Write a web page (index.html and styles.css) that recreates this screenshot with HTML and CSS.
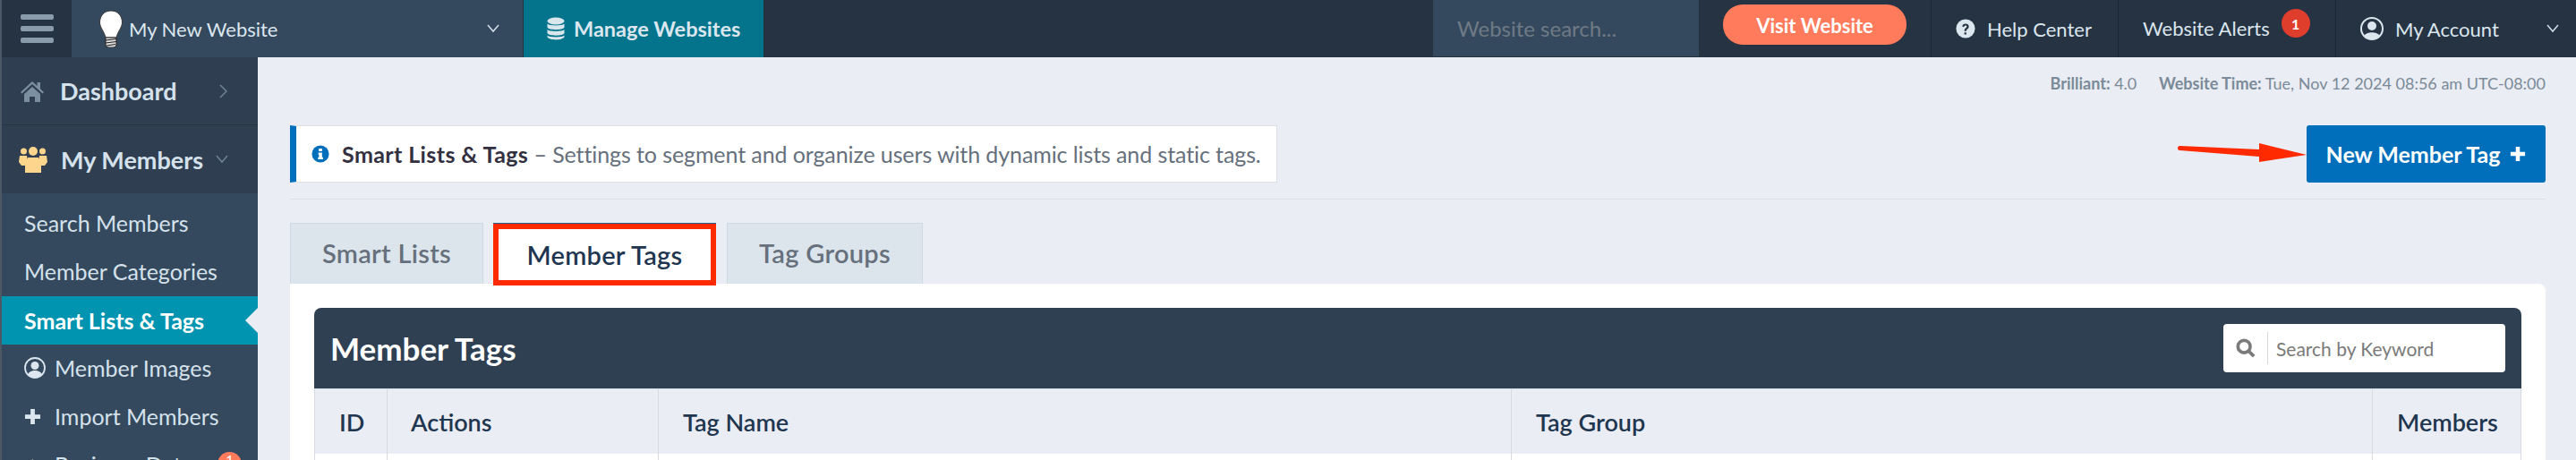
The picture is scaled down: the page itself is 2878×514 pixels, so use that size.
FILE: index.html
```html
<!DOCTYPE html>
<html lang="en">
<head>
    <meta charset="UTF-8">
    <meta name="viewport" content="width=device-width, initial-scale=1.0">
    <title>Member Tags</title>
    <link rel="stylesheet" href="styles.css">
</head>
<body>
    <header class="topbar">
        <div class="menu-toggle"><span></span><span></span><span></span></div>
        <div class="site-picker">
            <svg class="bulb" viewBox="0 0 28 42" width="28" height="42">
                <path d="M14 1C6 1 1.500 7 1.500 14c0 6 5 10 6.500 17h12c1.500-7 6.500-11 6.500-17C26.500 7 22 1 14 1z" fill="#fff" stroke="#333" stroke-width="1"/>
                <path d="M8 31h12v8a3 3 0 0 1-3 3h-6a3 3 0 0 1-3-3z" fill="#ddd" stroke="#222"/>
                <path d="M8 34l12-1.500M8 37l12-1.500M9 40l10-1.500" stroke="#222" stroke-width="1.200"/>
            </svg>
            <span class="site-name">My New Website</span>
            <svg class="chev" viewBox="0 0 14 10" width="14" height="10"><path d="M1 1l6 7 6-7" fill="none" stroke="#d5e0ea" stroke-width="1.500"/></svg>
        </div>
        <a class="manage">
            <svg viewBox="0 0 20 26" width="20" height="26"><g fill="#d9e6ec"><ellipse cx="10" cy="4.500" rx="9.500" ry="4"/><path d="M.5 7.500c2 2.500 17 2.500 19 0v4c-1 3.500-18 3.500-19 0z"/><path d="M.5 14c2 2.500 17 2.500 19 0v4c-1 3.500-18 3.500-19 0z"/><path d="M.5 20.500c2 2.500 17 2.500 19 0v1.500c-1 4.500-18 4.500-19 0z"/></g></svg>
            Manage Websites
        </a>
        <div class="top-spacer"></div>
        <div class="site-search">Website search...</div>
        <div class="visit-wrap"><a class="visit">Visit Website</a></div>
        <a class="top-link help">
            <svg viewBox="0 0 24 24" width="22" height="22"><circle cx="12" cy="12" r="11.500" fill="#dbe6ee"/><path d="M8 9.500C8 7 10 6 12 6s4 1.300 4 3.500c0 3-3 2.800-3 5.500h-2.500c0-4 3-3.800 3-5.500 0-.9-.7-1.300-1.500-1.300s-1.600.5-1.700 1.700zM10.500 16.500H13V19h-2.500z" fill="#263343"/></svg>
            Help Center
        </a>
        <a class="top-link alerts">Website Alerts <span class="alert-count">1</span></a>
        <a class="top-link account">
            <svg viewBox="0 0 26 26" width="26" height="26"><circle cx="13" cy="13" r="12" fill="#263343" stroke="#dbe6ee" stroke-width="2"/><circle cx="13" cy="10" r="5" fill="#dbe6ee"/><path d="M4.500 21c2-5 15-5 17 0-4 5-13 5-17 0z" fill="#dbe6ee"/></svg>
            My Account
            <svg class="chev" viewBox="0 0 14 10" width="14" height="10"><path d="M1 1l6 7 6-7" fill="none" stroke="#d5e0ea" stroke-width="1.500"/></svg>
        </a>
    </header>

    <div class="page">
        <nav class="sidebar">
            <a class="nav-main dashboard">
                <svg viewBox="0 0 26 24" width="26" height="24"><path d="M13 1L0 13l1.500 1.500L13 4l11.500 10.500L26 13l-4-3.700V2h-3.500v4z" fill="#7b8fa0"/><path d="M4 15l9-8 9 8v9h-6v-6h-6v6H4z" fill="#7b8fa0"/></svg>
                <span>Dashboard</span>
                <svg class="nav-chev" viewBox="0 0 10 16" width="10" height="16"><path d="M1 1l7 7-7 7" fill="none" stroke="#6f8394" stroke-width="1.500"/></svg>
            </a>
            <a class="nav-main members">
                <svg viewBox="0 0 32 30" width="32" height="30"><g fill="#fdd58c"><circle cx="5.500" cy="6" r="3.500"/><circle cx="26.500" cy="6" r="3.500"/><circle cx="16" cy="6" r="5"/><path d="M1 11h8l1 8-2 3H3l-3-4zM23 11h8l1 7-3 4h-5l-2-3z"/><path d="M10 13h12l3 7v10H7V20z"/></g></svg>
                <span>My Members</span>
                <svg class="nav-chev" viewBox="0 0 14 10" width="14" height="10"><path d="M1 1l6 7 6-7" fill="none" stroke="#6f8394" stroke-width="1.500"/></svg>
            </a>
            <div class="submenu">
                <a class="sub-item">Search Members</a>
                <a class="sub-item">Member Categories</a>
                <a class="sub-item current">Smart Lists &amp; Tags</a>
                <a class="sub-item">
                    <svg viewBox="0 0 24 24" width="24" height="24"><circle cx="12" cy="12" r="11" fill="#34495e" stroke="#dbe6ee" stroke-width="1.800"/><circle cx="12" cy="9.500" r="4.500" fill="#dbe6ee"/><path d="M4 19.500c2-6 14-6 16 0-4 4.500-12 4.500-16 0z" fill="#dbe6ee"/></svg>
                    Member Images
                </a>
                <a class="sub-item">
                    <svg class="sub-plus" viewBox="0 0 20 20" width="19" height="19"><path d="M7.500 1h5v6.500H19v5h-6.500V19h-5v-6.500H1v-5h6.500z" fill="#dbe6ee"/></svg>
                    Import Members
                </a>
                <a class="sub-item">
                    <svg class="sub-plus" viewBox="0 0 20 20" width="19" height="19"><path d="M1 12l9-9v5h9v5H1z" fill="#dbe6ee"/></svg>
                    Business Data
                    <span class="nav-badge">1</span>
                </a>
            </div>
        </nav>

        <main class="content">
            <div class="meta"><b>Brilliant:</b> 4.0 <b class="meta-gap">Website Time:</b> Tue, Nov 12 2024 08:56 am UTC-08:00</div>
            <div class="page-head">
                <div class="info-box">
                    <svg viewBox="0 0 22 22" width="20" height="20"><circle cx="11" cy="11" r="10.500" fill="#006fbb"/><path d="M9 4.500h4v3.200H9zM8.500 9.300H13V15h1.200v2.700H8v-2.700h1.200v-3H8.500z" fill="#fff"/></svg>
                    <span><b>Smart Lists &amp; Tags</b> &ndash; Settings to segment and organize users with dynamic lists and static tags.</span>
                </div>
                <a class="btn-new">New Member Tag
                    <svg viewBox="0 0 20 20" width="18" height="18"><path d="M7.500 1h5v6.500H19v5h-6.500V19h-5v-6.500H1v-5h6.500z" fill="#fff"/></svg>
                </a>
                <svg class="arrow" viewBox="0 0 144 21" width="144" height="21"><path d="M2.500 3L91 7V0l53 13-53 8v-6L2.500 8a2.500 2.500 0 0 1 0-5z" fill="#ff2a00"/></svg>
            </div>
            <div class="tabs">
                <a class="tab tab-lists">Smart Lists</a>
                <a class="tab tab-active">Member Tags</a>
                <a class="tab tab-groups">Tag Groups</a>
            </div>
            <section class="card">
                <div class="panel-head">
                    <h2>Member Tags</h2>
                    <div class="keyword">
                        <svg viewBox="0 0 24 24" width="22" height="22"><circle cx="10" cy="10" r="7.500" fill="none" stroke="#7a7a7a" stroke-width="4"/><path d="M15.500 15.500L22 22" stroke="#7a7a7a" stroke-width="4"/></svg>
                        <span class="keyword-text">Search by Keyword</span>
                    </div>
                </div>
                <div class="table-head">
                    <div class="col col-id">ID</div>
                    <div class="col col-actions">Actions</div>
                    <div class="col col-name">Tag Name</div>
                    <div class="col col-group">Tag Group</div>
                    <div class="col col-members">Members</div>
                </div>
                <div class="table-row">
                    <div class="col col-id"></div>
                    <div class="col col-actions"></div>
                    <div class="col col-name"></div>
                    <div class="col col-group"></div>
                    <div class="col col-members"></div>
                </div>
            </section>
        </main>
    </div>
</body>
</html>
```

FILE: styles.css
```css
* {
    box-sizing: border-box;
}
body {
    font-family: 'Lato', 'Noto Sans', sans-serif;
    margin: 0;
    height: 100vh;
    overflow: hidden;
    background: #eaedf3;
    color: #1f3650;
}
svg {
    flex: none;
}

/* top bar */
.topbar {
    display: flex;
    height: 64px;
    background: #263343;
    color: #dbe6ee;
    font-size: 22px;
}
.menu-toggle {
    width: 80px;
    border-left: 2px solid #4c5866;
    display: flex;
    flex-direction: column;
    justify-content: center;
    align-items: center;
    gap: 7px;
    padding-bottom: 1px;
}
.menu-toggle span {
    width: 37px;
    height: 6px;
    border-radius: 2px;
    background: #8a9cab;
}
.site-picker {
    width: 504px;
    background: #34495e;
    display: flex;
    align-items: center;
    padding: 0 26px 0 30px;
}
.bulb {
    margin-right: 6px;
}
.site-name {
    flex: 1;
}
.manage {
    width: 268px;
    margin-left: 1px;
    background: #03748c;
    display: flex;
    align-items: center;
    gap: 10px;
    padding-left: 26px;
    font-size: 23.500px;
    font-weight: 700;
}
.top-spacer {
    flex: 1;
}
.site-search {
    width: 297px;
    height: 63px;
    background: #34495e;
    color: #6f7a85;
    font-size: 24px;
    display: flex;
    align-items: center;
    padding-left: 27px;
}
.visit-wrap {
    width: 260px;
    padding: 5px 0 0 27px;
    border-right: 1px solid #1c2733;
}
.visit {
    display: flex;
    align-items: center;
    justify-content: center;
    width: 205px;
    height: 45px;
    padding-top: 2px;
    border-radius: 22px;
    background: #ff7b5c;
    color: #fff;
    font-weight: 700;
}
.top-link {
    display: flex;
    align-items: center;
    height: 64px;
}
.help {
    width: 209px;
    gap: 13px;
    padding-left: 27px;
    border-right: 1px solid #1c2733;
}
.alerts {
    width: 243px;
    padding-left: 27px;
    border-right: 1px solid #1c2733;
    padding-bottom: 2px;
}
.alert-count {
    width: 32px;
    height: 32px;
    margin: 0 0 10px 13px;
    border-radius: 50%;
    background: #e03e2d;
    color: #fff;
    font-size: 16px;
    font-weight: 700;
    display: flex;
    align-items: center;
    justify-content: center;
}
.account {
    width: 268px;
    gap: 13px;
    padding-left: 27px;
}
.account .chev {
    margin-left: 40px;
}

/* sidebar */
.page {
    display: flex;
    height: 450px;
}
.sidebar {
    width: 288px;
    border-left: 2px solid #4c5866;
    background: #2f3e50;
    color: #d5e2ec;
    flex: none;
}
.nav-main {
    display: flex;
    align-items: center;
    height: 76px;
    padding-left: 21px;
    font-size: 27px;
    font-weight: 700;
    border-bottom: 1px solid #263343;
    position: relative;
}
.nav-main span {
    margin-left: 18px;
}
.members {
    height: 76px;
    padding-left: 19px;
    border-bottom: 0;
}
.members span {
    margin-left: 15px;
}
.nav-chev {
    position: absolute;
    right: 33px;
}
.submenu {
    background: #34495e;
    padding-top: 6px;
    height: 400px;
}
.sub-item {
    display: flex;
    align-items: center;
    gap: 10px;
    height: 54px;
    padding-left: 25px;
    font-size: 25px;
    position: relative;
}
.sub-plus {
    margin-right: 5px;
}
.sub-item.current {
    background: #0094b0;
    color: #fff;
    font-weight: 700;
    margin-top: 1px;
    margin-bottom: -1px;
}
/* notch pointing at the page */
.sub-item.current::after {
    content: "";
    position: absolute;
    right: 0;
    top: 13px;
    border: 14px solid transparent;
    border-left-width: 0;
    border-right-color: #eaedf3;
}
.nav-badge {
    position: absolute;
    left: 241px;
    top: 13px;
    width: 27px;
    height: 27px;
    border-radius: 50%;
    background: #ff7b5c;
    color: #fff;
    font-size: 15px;
    text-align: center;
}

/* main content */
.content {
    flex: 1;
    padding: 0 34px 0 36px;
    min-width: 0;
}
.meta {
    height: 76px;
    padding-top: 18px;
    text-align: right;
    font-size: 18px;
    color: #7a8a99;
}
.meta-gap {
    margin-left: 20px;
}
.page-head {
    display: flex;
    justify-content: space-between;
    height: 83px;
    border-bottom: 1px solid #dcdfe4;
    position: relative;
}
.info-box {
    width: 1103px;
    height: 64px;
    background: #fff;
    border: 1px solid #dcdfe4;
    border-left: 7px solid #006fbb;
    display: flex;
    align-items: center;
    gap: 14px;
    padding-left: 17px;
    font-size: 25px;
    letter-spacing: -0.1px;
    color: #66707c;
}
.info-box b {
    color: #33303f;
    letter-spacing: 0.4px;
}
.btn-new {
    width: 267px;
    height: 64px;
    border-radius: 3px;
    background: #006fbb;
    color: #fff;
    font-size: 25px;
    font-weight: 700;
    display: flex;
    align-items: center;
    justify-content: center;
    gap: 11px;
}
.arrow {
    position: absolute;
    right: 267px;
    top: 20px;
}
.tabs {
    display: flex;
    margin-top: 26px;
    height: 68px;
}
.tab {
    display: flex;
    align-items: center;
    justify-content: center;
    background: #dce4ec;
    border: 1px solid #cdd8e4;
    border-bottom: 0;
    color: #66707c;
    font-size: 29px;
    letter-spacing: 0.3px;
    font-weight: 600;
    padding-bottom: 3px;
}
.tab-lists {
    width: 216px;
}
.tab-active {
    width: 249px;
    height: 69px;
    margin: 1px 12px 0 11px;
    background: #fff;
    color: #1f3650;
    border: 6px solid #ff2a00;
    box-shadow: 0 -1px 0 #1f5f92;
    padding-bottom: 0;
    position: relative;
}
.tab-groups {
    width: 219px;
}
.card {
    background: #fff;
    border-top-right-radius: 8px;
    padding: 27px 27px 0;
    height: 200px;
}
.panel-head {
    height: 90px;
    background: #2f4052;
    border-radius: 8px 8px 0 0;
    color: #fff;
    display: flex;
    align-items: center;
    justify-content: space-between;
    padding: 0 18px 0 18px;
}
.panel-head h2 {
    margin: 0;
    font-size: 35px;
    font-weight: 700;
}
.keyword {
    width: 315px;
    height: 54px;
    border-radius: 4px;
    background: #fff;
    display: flex;
    align-items: center;
    padding-left: 14px;
    color: #7a7a7a;
    font-size: 21px;
}
.keyword-text {
    height: 36px;
    margin-left: 13px;
    padding-left: 9px;
    border-left: 1px solid #d8d8d8;
    display: flex;
    align-items: center;
}
.table-head, .table-row {
    display: flex;
    border-left: 1px solid #d8dce2;
    border-right: 1px solid #d8dce2;
}
.table-head {
    height: 73px;
    background: #eaedf3;
    border-top: 1px solid #d8dce2;
    font-size: 27px;
    font-weight: 600;
}
.table-row {
    height: 20px;
}
.col {
    display: flex;
    align-items: center;
    border-left: 1px solid #d8dce2;
    padding-left: 27px;
}
.col-id {
    width: 80px;
    border-left: 0;
    padding-left: 27px;
}
.col-actions {
    width: 303px;
    padding-left: 26px;
}
.col-name {
    width: 953px;
}
.col-group {
    width: 962px;
}
.col-members {
    flex: 1;
}
```
